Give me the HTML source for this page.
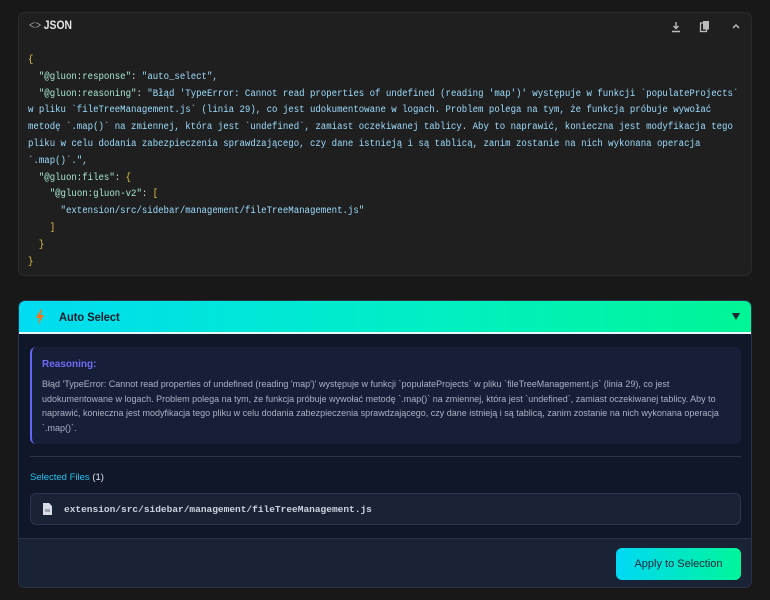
<!DOCTYPE html>
<html><head><meta charset="utf-8"><style>
*{box-sizing:border-box;margin:0;padding:0}
body{width:770px;height:600px;background:#181818;font-family:"Liberation Sans",sans-serif;position:relative;overflow:hidden}
.card{position:absolute;left:18px;top:12px;width:734px;height:264px;background:#1f1f1f;border:1px solid #2b2b2b;border-radius:7px}
.hdr{position:absolute;left:10px;top:7px;font-size:11.5px;font-weight:bold;color:#e5e5e5;transform:scaleX(0.9);transform-origin:left}
.hdr span{color:#9a9a9a;font-weight:normal;margin-right:3px}
pre{position:absolute;left:9px;top:39px;font-family:"Liberation Mono","DejaVu Sans Mono",monospace;font-size:9.9px;line-height:16.8px;color:#9cdcfe;white-space:pre;transform:scaleX(0.915);transform-origin:left top}
.k{color:#a7e8cf}.b{color:#e8c547}.p{color:#d4d4d4}
.as{position:absolute;left:18px;top:300px;width:734px;height:288px;background:#101729;border:1px solid #2a3348;border-radius:7px;overflow:hidden}
.grad{height:33px;background:linear-gradient(90deg,#00dcf2,#00f0c0 60%,#00f595);border-bottom:2px solid #e8f8ff;position:relative}
.grad .t{position:absolute;left:40px;top:9px;font-size:12px;font-weight:bold;color:#0f1a2a;transform:scaleX(0.92);transform-origin:left}
.reas{position:absolute;left:11px;top:46px;width:711px;height:97px;background:#171e38;border-left:2px solid #6366f1;border-radius:6px}
.reas h4{position:absolute;left:10px;top:12px;font-size:10px;color:#6d6cf5}
.reas p{position:absolute;left:10px;top:30px;width:690px;font-size:9px;line-height:14.7px;color:#aab2c4}
.div{position:absolute;left:11px;top:155px;width:711px;height:1px;background:#2c3548}
.sf{position:absolute;left:11px;top:171px;font-size:9.5px;color:#22c3ee}
.sf b{color:#dde3ee;font-weight:normal}
.file{position:absolute;left:11px;top:192px;width:711px;height:32px;background:#1a2236;border:1px solid #2b3550;border-radius:6px}
.file span{position:absolute;left:33px;top:10px;font-family:"Liberation Mono",monospace;font-size:9.5px;font-weight:bold;color:#cdd3de}
.foot{position:absolute;left:0;top:237px;width:734px;height:51px;background:#1a2236;border-top:1px solid #2a3348}
.btn{position:absolute;left:597px;top:9px;width:125px;height:32px;border-radius:6px;background:linear-gradient(90deg,#00d8f5,#00f59a);font-size:11px;color:#13233a;text-align:center;line-height:32px}
</style></head><body>
<div class="card">
<div class="hdr"><span>&lt;&gt;</span>JSON</div>
<svg style="position:absolute;left:651px;top:8px" width="12" height="12" viewBox="0 0 12 12"><path d="M6 1v6M3.5 5L6 7.5 8.5 5M2 10.5h8" stroke="#bbb" stroke-width="1.4" fill="none"/></svg>
<svg style="position:absolute;left:680px;top:7px" width="12" height="13" viewBox="0 0 12 13"><rect x="1.5" y="3" width="6" height="8.5" fill="none" stroke="#bbb" stroke-width="1.3"/><rect x="4" y="1" width="6" height="8.5" fill="#bbb"/></svg>
<svg style="position:absolute;left:712px;top:9px" width="10" height="8" viewBox="0 0 10 8"><path d="M2 6L5 3 8 6" stroke="#bbb" stroke-width="1.5" fill="none"/></svg>
<pre><span class="b">{</span>
  <span class="k">"@gluon:response"</span><span class="p">:</span> "auto_select",
  <span class="k">"@gluon:reasoning"</span><span class="p">:</span> "Błąd 'TypeError: Cannot read properties of undefined (reading 'map')' występuje w funkcji `populateProjects`
w pliku `fileTreeManagement.js` (linia 29), co jest udokumentowane w logach. Problem polega na tym, że funkcja próbuje wywołać
metodę `.map()` na zmiennej, która jest `undefined`, zamiast oczekiwanej tablicy. Aby to naprawić, konieczna jest modyfikacja tego
pliku w celu dodania zabezpieczenia sprawdzającego, czy dane istnieją i są tablicą, zanim zostanie na nich wykonana operacja
`.map()`.",
  <span class="k">"@gluon:files"</span><span class="p">:</span> <span class="b">{</span>
    <span class="k">"@gluon:gluon-v2"</span><span class="p">:</span> <span class="b">[</span>
      "extension/src/sidebar/management/fileTreeManagement.js"
    <span class="b">]</span>
  <span class="b">}</span>
<span class="b">}</span></pre>
</div>
<div class="as">
<div class="grad">
<svg style="position:absolute;left:16px;top:8px" width="10" height="16" viewBox="0 0 10 16"><path d="M6 0L1 9h3.5L3 16 9 6H5.5L7 0z" fill="#f97316"/></svg>
<div class="t">Auto Select</div>
<svg style="position:absolute;left:713px;top:12px" width="8" height="7" viewBox="0 0 8 7"><path d="M0 0h8L4 7z" fill="#1a2a30"/></svg>
</div>
<div class="reas"><h4>Reasoning:</h4><p>Błąd 'TypeError: Cannot read properties of undefined (reading 'map')' występuje w funkcji `populateProjects` w pliku `fileTreeManagement.js` (linia 29), co jest udokumentowane w logach. Problem polega na tym, że funkcja próbuje wywołać metodę `.map()` na zmiennej, która jest `undefined`, zamiast oczekiwanej tablicy. Aby to naprawić, konieczna jest modyfikacja tego pliku w celu dodania zabezpieczenia sprawdzającego, czy dane istnieją i są tablicą, zanim zostanie na nich wykonana operacja `.map()`.</p></div>
<div class="div"></div>
<div class="sf">Selected Files <b>(1)</b></div>
<div class="file"><svg style="position:absolute;left:12px;top:9px" width="9" height="12" viewBox="0 0 9 12"><path d="M0 0h6l3 3v9H0z" fill="#d8dce6"/><rect x="2" y="6" width="5" height="3" fill="#9aa2b4"/></svg><span>extension/src/sidebar/management/fileTreeManagement.js</span></div>
<div class="foot"><div class="btn">Apply to Selection</div></div>
</div>
</body></html>
